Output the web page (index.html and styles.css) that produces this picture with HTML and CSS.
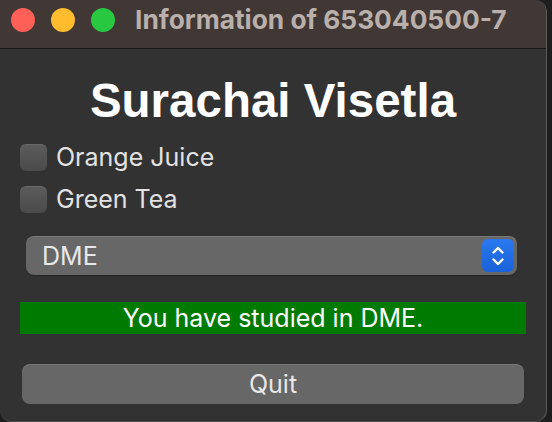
FILE: index.html
```html
<!DOCTYPE html>
<html>
<head>
<meta charset="utf-8">
<link rel="stylesheet" href="styles.css">
</head>
<body>
<div class="window">
  <div class="titlebar">
    <div class="lights">
      <span class="light red"></span>
      <span class="light yellow"></span>
      <span class="light green"></span>
    </div>
    <div class="title">Information of 653040500-7</div>
  </div>
  <div class="content">
    <h1 class="name">Surachai Visetla</h1>
    <label class="check"><span class="box"></span><span class="label">Orange Juice</span></label>
    <label class="check"><span class="box"></span><span class="label">Green Tea</span></label>
    <div class="select">
      <span class="select-text">DME</span>
      <span class="stepper">
        <svg width="16" height="26" viewBox="0 0 16 26"><path d="M3.5 9.5 L8 5 L12.5 9.5" fill="none" stroke="#ffffff" stroke-width="2.4" stroke-linecap="round" stroke-linejoin="round"/><path d="M3.5 16.5 L8 21 L12.5 16.5" fill="none" stroke="#ffffff" stroke-width="2.4" stroke-linecap="round" stroke-linejoin="round"/></svg>
      </span>
    </div>
    <div class="status">You have studied in DME.</div>
    <div class="button">Quit</div>
  </div>
</div>
</body>
</html>
```
FILE: styles.css
```css
html, body {
  margin: 0;
  padding: 0;
  background: #1e1e1e;
  overflow: hidden;
}
body {
  width: 552px;
  height: 422px;
}
.window {
  width: 546px;
  height: 421px;
  background: #323232;
  border-right: 1px solid #5a5a5a;
  border-bottom: 1px solid #4a4a4a;
  border-radius: 0 12px 12px 12px;
  overflow: hidden;
  font-family: Inter, "Liberation Sans", sans-serif;
}
.titlebar {
  height: 48px;
  background: #413734;
  border-bottom: 1px solid #1a1a1a;
  display: flex;
  align-items: center;
}
.lights {
  display: flex;
  gap: 16px;
  padding-left: 11px;
  margin-top: -8px;
}
.light {
  width: 24px;
  height: 24px;
  border-radius: 50%;
  display: block;
}
.red { background: #fe5f57; }
.yellow { background: #febc2e; }
.green { background: #28c840; }
.title {
  margin-left: 20px;
  margin-top: -9px;
  color: #b9b0ac;
  font-weight: 700;
  font-size: 26.3px;
}
.content {
  padding: 0 20px;
  display: flex;
  flex-direction: column;
}
.name {
  margin: 25px 0 0 0;
  text-align: center;
  font-family: "Liberation Sans", Arial, sans-serif;
  font-weight: 700;
  font-size: 47.5px;
  line-height: 54px;
  color: #ffffff;
}
.check {
  display: flex;
  align-items: center;
  height: 42px;
}
.check:first-of-type {
  margin-top: 8px;
}
.box {
  width: 27px;
  height: 27px;
  border-radius: 6px;
  background: linear-gradient(#5c5c5c, #4a4a4a);
  box-shadow: inset 0 1px 0 rgba(255,255,255,0.08);
}
.label {
  margin-left: 9px;
  font-size: 25px;
  color: #e2e2e2;
}
.select {
  margin: 16px 9px 0 6px;
  height: 39px;
  border-radius: 8px;
  background: #676767;
  box-shadow: inset 0 1px 0 rgba(255,255,255,0.12), 0 1px 1px rgba(0,0,0,0.3);
  display: flex;
  align-items: center;
  justify-content: space-between;
  padding: 0 3px 0 16px;
}
.select-text {
  font-size: 25px;
  color: #e8e8e8;
}
.stepper {
  width: 32px;
  height: 33px;
  border-radius: 6px;
  background: linear-gradient(#2a78f0, #1a62d8);
  display: flex;
  align-items: center;
  justify-content: center;
}
.status {
  margin-top: 27px;
  height: 32px;
  background: #007a00;
  color: #ffffff;
  font-size: 25px;
  display: flex;
  align-items: center;
  justify-content: center;
}
.button {
  margin: 30px 2px 0 2px;
  height: 40px;
  border-radius: 8px;
  background: #676767;
  box-shadow: inset 0 1px 0 rgba(255,255,255,0.1);
  color: #e8e8e8;
  font-size: 25px;
  display: flex;
  align-items: center;
  justify-content: center;
}
```
